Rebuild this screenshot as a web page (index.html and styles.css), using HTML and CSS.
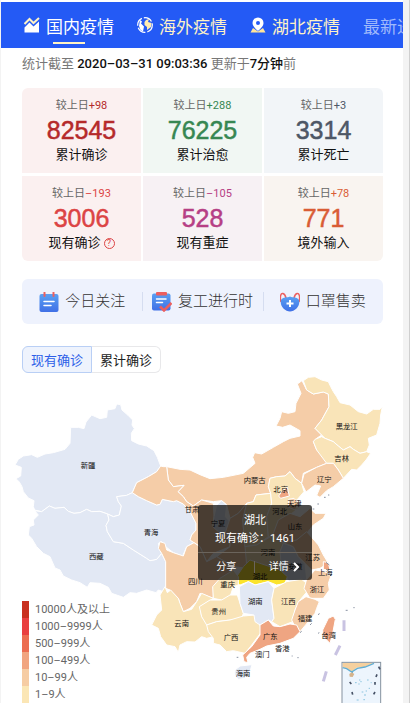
FILE: index.html
```
<!DOCTYPE html>
<html lang="zh-CN">
<head>
    <meta charset="UTF-8">
    <title>疫情实时数据</title>
    <link rel="stylesheet" href="styles.css">
</head>
<body>
<div class="page">
    <nav class="nav">
        <a href="#" class="nav-item active">
            <svg class="nav-icon" viewBox="0 0 16 16"><path d="M0.500 7 5.500 2 9.500 6 15 1" fill="none" stroke="#fff3c4" stroke-width="2"/><path d="M0.500 10.500 5.500 5.500 9.500 9.500 15 4.500V15.500H0.500Z" fill="#fff"/></svg>
            <span>国内疫情</span>
        </a>
        <a href="#" class="nav-item">
            <svg class="nav-icon" viewBox="0 0 16 16"><circle cx="8" cy="8" r="7.300" fill="none" stroke="#fff" stroke-width="1.200" stroke-dasharray="9 2"/><path d="M3 3 5 4.500 4 6.500 7 9.500 6 14.500 3.500 13 2 9Z" fill="#fff"/><path d="M9 3 12 2 11 5 14.500 6 14 10 10 13 10 10 7.500 8 7.500 5Z" fill="#ffebb0"/></svg>
            <span>海外疫情</span>
        </a>
        <a href="#" class="nav-item">
            <svg class="nav-icon" viewBox="0 0 16 16"><path d="M3 11 0.500 15.500H15.500L13 11 8 14.500Z" fill="#ffe59b"/><path fill-rule="evenodd" d="M8 0.500a5.500 5.500 0 0 1 5.500 5.500C13.500 9.500 10 12 8 14 6 12 2.500 9.500 2.500 6A5.500 5.500 0 0 1 8 0.500ZM8 4a2 2 0 1 0 0 4 2 2 0 0 0 0-4Z" fill="#fff"/></svg>
            <span>湖北疫情</span>
        </a>
        <a href="#" class="nav-item more">最新进展</a>
    </nav>

    <main class="main">
        <p class="time">统计截至 <b>2020–03–31 09:03:36</b> 更新于<b>7分钟</b>前</p>

        <ul class="stats">
            <li class="stat confirm">
                <p class="stat-add">较上日<em>+98</em></p>
                <p class="stat-num">82545</p>
                <p class="stat-name">累计确诊</p>
            </li>
            <li class="stat heal">
                <p class="stat-add">较上日<em>+288</em></p>
                <p class="stat-num">76225</p>
                <p class="stat-name">累计治愈</p>
            </li>
            <li class="stat dead">
                <p class="stat-add">较上日<em>+3</em></p>
                <p class="stat-num">3314</p>
                <p class="stat-name">累计死亡</p>
            </li>
            <li class="stat now">
                <p class="stat-add">较上日<em>–193</em></p>
                <p class="stat-num">3006</p>
                <p class="stat-name">现有确诊<button class="help" type="button">?</button></p>
            </li>
            <li class="stat severe">
                <p class="stat-add">较上日<em>–105</em></p>
                <p class="stat-num">528</p>
                <p class="stat-name">现有重症</p>
            </li>
            <li class="stat import">
                <p class="stat-add">较上日<em>+78</em></p>
                <p class="stat-num">771</p>
                <p class="stat-name">境外输入</p>
            </li>
        </ul>

        <div class="links">
            <a href="#" class="link">
                <svg class="link-icon" viewBox="0 0 20 20">
                    <defs><linearGradient id="blue" x1="0" y1="0" x2="0" y2="1"><stop offset="0" stop-color="#5aa0f2"/><stop offset="1" stop-color="#4070e6"/></linearGradient></defs>
                    <rect x="0.500" y="2" width="19" height="18" rx="2" fill="url(#blue)"/>
                    <path d="M5.500 0.500V4M14.500 0.500V4" stroke="#ec5f5f" stroke-width="2" stroke-linecap="round"/>
                    <path d="M5 9.500H15M5 13.500H12" stroke="#fff" stroke-width="1.500" stroke-linecap="round"/>
                </svg>
                <span>今日关注</span>
            </a>
            <a href="#" class="link">
                <svg class="link-icon" viewBox="0 0 20 20">
                    <rect x="0" y="1.500" width="18.500" height="17" rx="2" fill="url(#blue)"/>
                    <rect x="4" y="0" width="11" height="3.500" rx="1" fill="#ec5f5f"/>
                    <path d="M4.500 7H14M4.500 10.500H10.500" stroke="#fff" stroke-width="1.500" stroke-linecap="round"/>
                    <path d="M8 14.500 12 18.500 19.500 11" fill="none" stroke="#ec5f5f" stroke-width="2.500"/>
                </svg>
                <span>复工进行时</span>
            </a>
            <a href="#" class="link">
                <svg class="link-icon" viewBox="0 0 20 20">
                    <path d="M1 10C-0.500 4 1 1 3 1.500 5 2 5.500 4 6 6M19 10C20.500 4 19 1 17 1.500 15 2 14.500 4 14 6" fill="none" stroke="#ec5f5f" stroke-width="1.500"/>
                    <path d="M1 8C3 4.500 7 6 10 4.500 13 6 17 4.500 19 8 20.500 14 15 19.500 10 19.500S-0.500 14 1 8Z" fill="url(#blue)"/>
                    <path d="M10 8V15M6.500 11.500H13.500" stroke="#fff" stroke-width="2"/>
                </svg>
                <span>口罩售卖</span>
            </a>
        </div>

        <div class="tabs">
            <button type="button" class="tab current">现有确诊</button>
            <button type="button" class="tab">累计确诊</button>
        </div>
    </main>

    <section class="map">
        <svg class="map-svg" viewBox="3 9 1206 990">
            <!-- 省份 -->
            <g class="area">
                <path class="lv0" d="M350 102 362 104 366 120 384 136 398 150 396 165 403 176 394 190 395 212 415 222 440 228 462 242 472 262 482 288 470 305 445 320 410 338 397 368 380 376 350 380 355 395 364 408 358 435 340 440 323 432 300 424 275 425 260 418 240 428 222 430 205 424 192 412 165 415 148 408 125 425 104 420 100 410 102 392 85 384 70 365 66 350 58 336 48 326 62 318 64 292 45 285 55 268 70 258 95 254 112 262 135 252 160 248 195 238 210 220 212 172 235 172 252 176 258 156 275 135 300 146 320 142 322 120 345 116Z"/>
                <path class="lv0" d="M104 422 125 425 148 408 165 415 192 412 205 424 222 430 240 428 260 418 275 425 300 424 323 432 327 450 318 466 322 485 340 515 370 520 400 540 440 565 450 572 470 568 485 550 497 575 497 650 490 665 475 660 468 668 440 660 410 670 390 668 370 682 335 670 325 652 300 640 270 638 262 652 240 638 215 630 190 618 180 600 165 594 150 560 130 550 110 530 95 505 85 495 88 470 102 465 100 450 115 435Z"/>
                <path class="lv0" d="M350 380 380 376 397 368 415 380 440 392 470 405 480 403 487 388 520 395 530 392 550 402 570 425 588 460 588 480 575 495 570 510 582 518 560 530 548 558 520 548 497 530 485 515 475 520 480 540 485 550 470 568 450 572 440 565 400 540 370 520 340 515 322 485 318 466 327 450 323 432 340 440 358 435 364 408 355 395Z"/>
                <path class="lv2" d="M500 290 540 298 570 300 600 314 630 326 670 322 730 310 765 280 758 262 764 248 785 252 820 232 850 215 870 205 900 198 900 182 870 165 848 172 828 168 840 145 845 125 865 130 885 125 888 100 903 70 892 42 906 32 920 60 940 72 970 66 985 72 987 110 965 150 945 175 965 195 950 205 940 215 950 240 975 262 980 280 950 292 910 310 905 340 885 325 870 305 855 318 830 320 810 325 805 350 812 370 768 375 760 395 740 400 715 430 690 445 680 405 665 392 640 395 605 390 580 408 560 395 550 380 534 365 552 346 520 350 505 330Z"/>
                <path class="lv2" d="M482 288 490 290 500 290 505 330 520 350 552 346 534 365 550 380 560 395 580 408 605 390 640 400 642 440 640 470 690 490 690 530 640 550 620 575 600 530 582 518 570 510 575 495 588 480 588 460 570 425 550 402 530 392 520 395 487 388 480 403 470 405 440 392 415 380 397 368 410 338 445 320 470 305Z"/>
                <path class="lv0" d="M650 405 665 392 680 405 676 440 690 455 672 500 638 470 642 440Z"/>
                <path class="lv2" d="M690 445 715 430 740 400 728 450 735 530 770 570 745 595 700 590 650 560 690 530 690 490 672 500Z"/>
                <path class="lv1" d="M740 400 760 395 768 375 812 370 815 400 800 440 805 500 770 525 735 530 728 450Z"/>
                <path class="lv1" d="M810 325 830 320 855 318 870 305 885 325 905 340 912 365 895 385 880 400 895 415 850 450 820 500 805 500 800 440 815 400 812 370 805 350Z"/>
                <path class="lv3" d="M836 378 845 365 862 352 868 378 842 385Z"/>
                <path class="lv2" d="M866 388 882 385 895 400 886 420 866 412Z"/>
                <path class="lv2" d="M820 490 835 450 870 430 900 440 930 415 945 430 978 430 970 445 940 465 920 490 890 510 860 520 830 510Z"/>
                <path class="lv1" d="M735 530 770 525 820 495 850 520 840 545 850 600 800 605 740 585Z"/>
                <path class="lv0" d="M850 520 880 530 895 560 915 580 920 628 905 636 870 640 845 600 840 545Z"/>
                <path class="lv2" d="M850 518 890 510 920 485 955 525 970 555 985 580 960 595 935 600 915 580 895 560 880 530Z"/>
                <path class="lv3" d="M970 575 985 578 990 600 970 598Z"/>
                <path class="lv4" d="M700 635 730 590 750 570 840 600 862 620 855 640 830 645 805 635 765 645 745 635 720 645Z"/>
                <path class="lv2" d="M475 535 480 515 495 520 500 540 520 548 550 558 560 530 582 518 600 530 620 575 650 560 700 590 680 630 640 650 640 685 600 670 590 695 570 715 550 725 540 700 535 685 510 660 497 655 497 575 485 550Z"/>
                <path class="lv1" d="M638 650 660 625 700 600 715 620 715 645 700 650 690 680 665 690 640 685Z"/>
                <path class="lv1" d="M480 675 495 650 502 668 512 660 535 685 540 700 550 725 575 718 590 695 605 670 640 685 600 710 605 740 625 765 640 780 642 800 620 805 605 800 585 816 560 815 540 825 535 847 525 830 500 825 482 800 475 775 455 765 470 735 485 720Z"/>
                <path class="lv1" d="M598 710 630 690 665 690 690 675 712 675 720 700 730 730 725 745 690 750 650 755 620 765 605 740Z"/>
                <path class="lv1" d="M620 765 650 755 690 750 730 738 765 735 780 765 785 785 755 825 735 850 700 842 680 845 660 825 640 820 640 805 625 785Z"/>
                <path class="lv0" d="M718 650 745 635 765 645 805 635 822 655 815 690 822 745 815 755 805 750 780 765 765 755 762 735 730 730 720 700Z"/>
                <path class="lv1" d="M822 655 860 635 905 628 920 640 925 660 900 690 885 720 878 755 840 770 815 755 822 745 815 690Z"/>
                <path class="lv2" d="M920 628 945 600 975 605 992 620 985 640 988 660 970 685 930 685 912 655Z"/>
                <path class="lv2" d="M918 680 945 688 958 695 950 715 945 730 925 755 900 785 885 770 875 750 885 720 895 695Z"/>
                <path class="lv3" d="M780 765 805 750 820 768 840 770 870 762 890 765 900 785 880 805 840 820 800 828 780 838 750 850 740 862 744 878 732 875 728 855 755 830 780 795Z"/>
                <path class="lv0" d="M705 900 720 888 756 884 752 898 735 925 715 928 704 915Z"/>
                <path class="lv3" d="M1000 738 1006 748 998 790 990 820 970 800 968 780 985 745Z"/>
                <path class="lv1" d="M910 32 925 22 945 20 965 30 985 35 992 50 1000 65 1010 80 1020 98 1050 105 1075 125 1100 132 1120 118 1140 118 1147 110 1142 135 1140 160 1130 195 1105 205 1108 225 1100 245 1080 250 1060 238 1050 230 1030 240 1015 228 1000 215 975 205 965 195 945 175 965 150 987 110 985 72 970 66 940 72 920 60Z"/>
                <path class="lv1" d="M945 208 965 200 975 205 1000 215 1015 228 1030 240 1050 230 1060 238 1080 250 1100 245 1112 250 1098 270 1085 285 1070 300 1055 298 1030 325 1015 300 1000 280 980 280 950 240 940 215Z"/>
                <path class="lv2" d="M905 340 912 312 950 292 980 280 1000 280 1015 300 1030 325 1000 350 980 362 960 382 950 376 962 348 945 345 918 366Z"/>
            </g>

            <!-- 岛屿和海上界线 -->
            <g class="isle">
                <path d="M972 382h5M984 375h4M952 402h5M938 417h5M978 577 988 585M900 788l5-4M930 765l5-5M955 735l3-5M954 790l4-2M875 858h3M892 863h4M710 862h5M1037 721h6M1060 713h4M990 618l5-5"/>
                <path class="dash" d="M1032 751V783M1020 827 1006 855M979 904 970 934"/>
            </g>

            <!-- 南海诸岛 -->
            <g class="inset">
                <rect x="1026" y="877" width="116" height="140" fill="#edf5fd" stroke="#8592a0" stroke-width="3"/>
                <path d="M1028 879H1120L1095 890 1070 893 1055 905 1040 895 1028 892Z" fill="#f5d09e"/>
                <path d="M1028 893 1040 896 1055 906 1072 895 1095 891 1122 880M1057 902V910" fill="none" stroke="#62aed2" stroke-width="4"/>
                <path d="M1048 912 1055 907 1063 912 1058 921 1049 920Z" fill="#d5b38b"/>
                <path d="M1049 936 1054 942M1056 966 1058 974M1131 913 1128 921M1125 936V944M1125 966 1121 973M1136 890 1140 898" stroke="#465166" stroke-width="5"/>
                <path d="M1065 938h5M1077 930h4M1081 935h4M1075 942h4M1101 930h5M1112 938h3M1085 966h5M1097 963h4M1106 955h4M1092 975h6M1070 990h6M1090 989h5" stroke="#8bc4df" stroke-width="3"/>
            </g>

            <g class="name">
                <text x="264" y="293">新疆</text>
                <text x="289" y="566">西藏</text>
                <text x="453" y="494">青海</text>
                <text x="576" y="427">甘肃</text>
                <text x="764" y="338">内蒙古</text>
                <text x="1040" y="178">黑龙江</text>
                <text x="1025" y="274">吉林</text>
                <text x="973" y="335">辽宁</text>
                <text x="842" y="367">北京</text>
                <text x="883" y="408">天津</text>
                <text x="839" y="433">河北</text>
                <text x="885" y="477">山东</text>
                <text x="654" y="468">宁夏</text>
                <text x="804" y="556">河南</text>
                <text x="885" y="597">安徽</text>
                <text x="938" y="570">江苏</text>
                <text x="976" y="615">上海</text>
                <text x="780" y="626">湖北</text>
                <text x="586" y="642">四川</text>
                <text x="683" y="651">重庆</text>
                <text x="951" y="665">浙江</text>
                <text x="766" y="702">湖南</text>
                <text x="865" y="701">江西</text>
                <text x="656" y="733">贵州</text>
                <text x="545" y="769">云南</text>
                <text x="915" y="752">福建</text>
                <text x="693" y="811">广西</text>
                <text x="811" y="806">广东</text>
                <text x="986" y="803">台湾</text>
                <text x="847" y="842">香港</text>
                <text x="787" y="862">澳门</text>
                <text x="729" y="918">海南</text>
            </g>
        </svg>

        <ul class="legend">
            <li class="c5">10000人及以上</li>
            <li class="c4">1000–9999人</li>
            <li class="c3">500–999人</li>
            <li class="c2">100–499人</li>
            <li class="c1">10–99人</li>
            <li class="c0">1–9人</li>
        </ul>

        <div class="tip">
            <p class="tip-name">湖北</p>
            <p class="tip-num">现有确诊：1461</p>
            <div class="tip-btns">
                <button type="button">分享</button>
                <button type="button" class="detail">详情<svg viewBox="0 0 6 10"><path d="M1 1 5 5 1 9" fill="none" stroke="#fff" stroke-width="2"/></svg></button>
            </div>
        </div>
    </section>
</div>
</body>
</html>
```
FILE: styles.css
```
* {
    padding: 0;
    margin: 0;
    list-style: none;
    border: 0;
    box-sizing: border-box;
}

body {
    border-right: 1px solid #cfcfcf;
    background: #f3f3f3;
    font-family: Roboto, "Noto Sans CJK SC", sans-serif;
    color: #111;
}

a {
    text-decoration: none;
}

button {
    font-family: inherit;
    background: none;
    cursor: pointer;
}

.page {
    margin: 0 6px 0 1px;
    padding-top: 2px;
    background: #fff;
    overflow: hidden;
}

/* 顶部导航 */
.nav {
    display: flex;
    gap: 23px;
    height: 46px;
    padding-left: 23px;
    background: #245af5;
    overflow: hidden;
}

.nav-item {
    position: relative;
    display: flex;
    flex: none;
    align-items: center;
    gap: 6px;
    font-size: 17px;
    color: #fff2c6;
}

.nav-item.active {
    color: #fff;
}

.nav-item.active::after {
    content: "";
    position: absolute;
    left: 50%;
    bottom: 4px;
    width: 32px;
    height: 2px;
    margin-left: -16px;
    background: #fff3c4;
}

.nav-item.more {
    color: #a0b9fb;
}

.nav-icon {
    width: 16px;
    height: 16px;
}

.main {
    padding: 6px 20px 0 21px;
}

.time {
    font-size: 13px;
    line-height: 20px;
    color: #777;
    white-space: nowrap;
}

.time b {
    font-weight: 500;
    color: #111;
}

/* 数据 */
.stats {
    display: grid;
    grid-template-columns: repeat(3, 1fr);
    gap: 3px 2px;
    margin-top: 14px;
    border-radius: 6px;
    overflow: hidden;
}

.stat {
    padding: 11px 0 10px;
    text-align: center;
}

.stat-add {
    font-size: 11px;
    line-height: 14px;
    color: #666;
}

.stat-add em {
    font-style: normal;
}

.stat-num {
    font-family: "Liberation Sans", Arial, sans-serif;
    font-size: 25px;
    line-height: 34px;
    -webkit-text-stroke: 0.5px;
}

.stat-name {
    display: flex;
    justify-content: center;
    align-items: center;
    gap: 3px;
    font-size: 13px;
    line-height: 16px;
    color: #111;
}

.confirm {
    background: #fbf0f0;
}

.confirm em, .confirm .stat-num {
    color: #b52a2a;
}

.heal {
    background: #f1f7f3;
}

.heal em, .heal .stat-num {
    color: #378752;
}

.dead {
    background: #f2f5f8;
}

.dead em, .dead .stat-num {
    color: #4e5766;
}

.now {
    background: #fbf0f0;
}

.now em, .now .stat-num {
    color: #dc4444;
}

.severe {
    background: #f7f1f4;
}

.severe em, .severe .stat-num {
    color: #b63f85;
}

.import {
    background: #f9f4f0;
}

.import em, .import .stat-num {
    color: #d95c35;
}

.help {
    width: 11px;
    height: 11px;
    border: 1px solid #dc4444;
    border-radius: 50%;
    font-size: 9px;
    line-height: 9px;
    color: #dc4444;
}

/* 快捷入口 */
.links {
    display: flex;
    margin-top: 18px;
    padding: 12px 0;
    background: #eef2fd;
    border-radius: 6px;
}

.link {
    display: flex;
    flex: 1;
    justify-content: center;
    align-items: center;
    gap: 6px;
    font-size: 15px;
    font-weight: 300;
    line-height: 21px;
    color: #333;
}

.link + .link {
    background: linear-gradient(#d5ddf0, #d5ddf0) left center / 1px 19px no-repeat;
}

.link-icon {
    width: 20px;
    height: 20px;
}

.tabs {
    display: flex;
    margin-top: 22px;
}

.tab {
    height: 27px;
    padding: 0 8px;
    border: 1px solid #e8e8ea;
    border-left: 0;
    border-radius: 0 6px 6px 0;
    font-size: 13px;
    color: #222;
}

.tab.current {
    border: 1px solid #b9cff5;
    border-radius: 6px 0 0 6px;
    background: #eef3fd;
    color: #2d5fe8;
}

/* 地图 */
.map {
    position: relative;
}

.map-svg {
    display: block;
    width: 100%;
}

.area path {
    stroke: #fff;
    stroke-width: 3;
    stroke-linejoin: round;
}

.area .lv0 {
    fill: #e2e8f4;
}

.area .lv1 {
    fill: #f9e4b8;
}

.area .lv2 {
    fill: #f5cda8;
}

.area .lv3 {
    fill: #efa582;
}

.area .lv4 {
    fill: #fbe32d;
}

.isle path {
    stroke: #8a93a3;
    stroke-width: 3;
    fill: none;
}

.isle .dash {
    stroke: #c9c3e2;
    stroke-width: 9;
}

.name text {
    font-size: 22px;
    text-anchor: middle;
    fill: #111;
}

.legend {
    position: absolute;
    left: 21px;
    bottom: 0;
    font-size: 11px;
    line-height: 17px;
    color: #666;
}

.legend li {
    padding-left: 6px;
    border-left: 7px solid;
}

.legend .c5 {
    border-color: #c9301f;
}

.legend .c4 {
    border-color: #e93f3f;
}

.legend .c3 {
    border-color: #ec6d50;
}

.legend .c2 {
    border-color: #f1a580;
}

.legend .c1 {
    border-color: #f6cca3;
}

.legend .c0 {
    border-color: #fbe6b5;
}

.tip {
    position: absolute;
    left: 49%;
    top: 40%;
    width: 114px;
    padding-top: 7px;
    background: rgba(0, 0, 0, .7);
    border-radius: 3px;
    font-size: 11px;
    line-height: 18px;
    text-align: center;
    color: #fff;
    white-space: nowrap;
}

.tip-btns {
    display: flex;
    align-items: center;
    height: 28px;
    margin-top: 4px;
    border-top: 1px solid #6b645c;
}

.tip-btns button {
    flex: 1;
    font-size: 10px;
    line-height: 12px;
    color: #fff;
}

.tip-btns .detail {
    display: flex;
    justify-content: center;
    align-items: center;
    gap: 4px;
    border-left: 1px solid #6b645c;
}

.detail svg {
    width: 6px;
    height: 10px;
}
```
